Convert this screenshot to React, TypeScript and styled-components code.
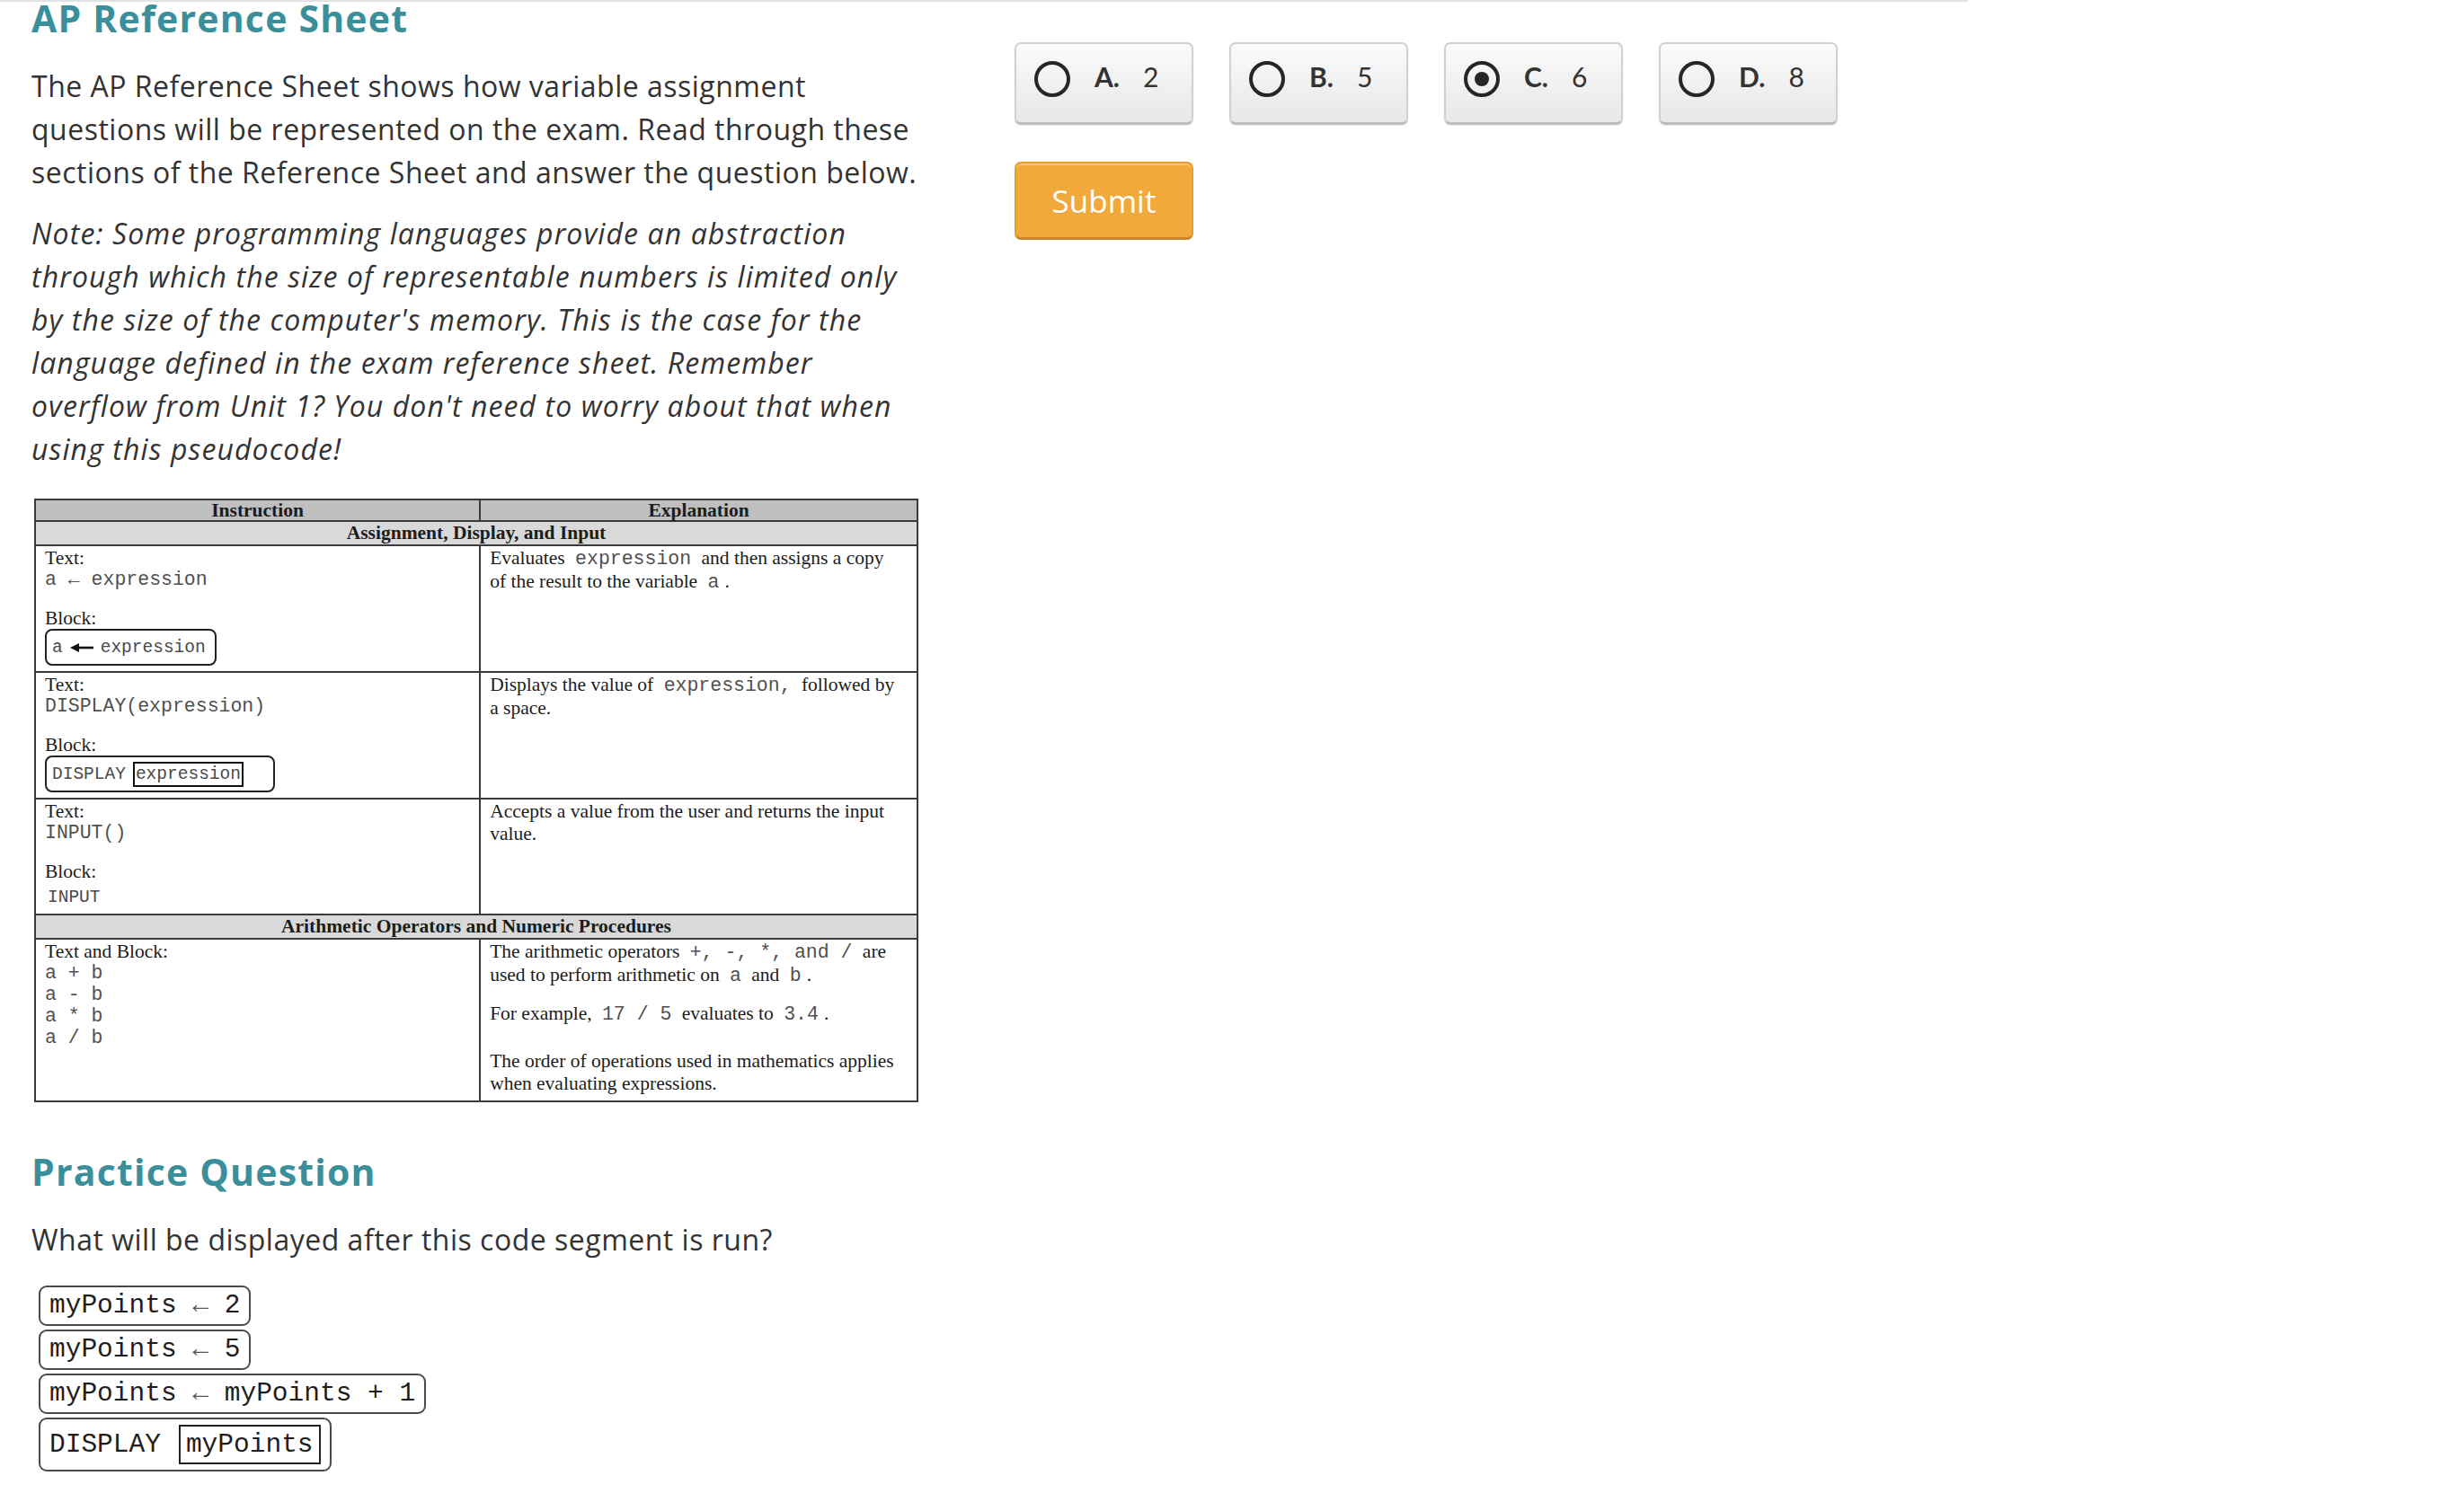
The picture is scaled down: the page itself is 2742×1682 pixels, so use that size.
import React from "react";
import styled, { createGlobalStyle } from "styled-components";

const GlobalStyle = createGlobalStyle`
  html, body { margin: 0; padding: 0; background: #ffffff; }
  body { font-family: "Open Sans", Lato, sans-serif; color: #333333; }
  * { box-sizing: border-box; }
`;

const TopRule = styled.div`
  width: 2190px;
  height: 2px;
  background: #e2e2e5;
`;

const Page = styled.div`
  display: flex;
  align-items: flex-start;
  gap: 94px;
  padding: 0 0 60px 35px;
`;

const LeftColumn = styled.main`
  width: 1000px;
  flex: none;
`;

const RightColumn = styled.aside`
  padding-top: 45px;
  display: flex;
  flex-direction: column;
  align-items: flex-start;
  gap: 41px;
`;

const Heading = styled.h2<{ $top?: number; $bottom?: number }>`
  margin: ${(p) => p.$top ?? 0}px 0 ${(p) => p.$bottom ?? 0}px;
  font-family: "Open Sans", sans-serif;
  font-size: 41px;
  line-height: 36px;
  letter-spacing: 1.2px;
  font-weight: 700;
  color: #3b8f9b;
`;

const Para = styled.p<{ $italic?: boolean; $bottom?: number }>`
  margin: 0 0 ${(p) => p.$bottom ?? 20}px;
  font-family: "Open Sans", sans-serif;
  font-size: 32px;
  line-height: 48px;
  letter-spacing: ${(p) => (p.$italic ? 1.1 : 0.5)}px;
  font-style: ${(p) => (p.$italic ? "italic" : "normal")};
  color: #333333;
  white-space: nowrap;
`;

/* ---------- reference table ---------- */

const RefTable = styled.table`
  width: 984px;
  margin: 0 0 0 3px;
  border-collapse: collapse;
  border: 2px solid #333333;
  font-family: "Liberation Serif", "Times New Roman", serif;
  font-size: 21.5px;
  color: #1c1c1c;
`;

const HeadCell = styled.th<{ $section?: boolean }>`
  padding: 0;
  border: 2px solid #3a3a3a;
  background: ${(p) => (p.$section ? "#d9d9d9" : "#bfbfbf")};
  font-weight: 700;
  text-align: center;
  line-height: ${(p) => (p.$section ? 25 : 22)}px;
  white-space: nowrap;
`;

const Cell = styled.td<{ $wide?: boolean }>`
  width: ${(p) => (p.$wide ? 497 : 487)}px;
  vertical-align: top;
  padding: 1px 10px 6px;
  border: 2px solid #3a3a3a;
  line-height: 24px;
  white-space: nowrap;
`;

const Label = styled.div<{ $gap?: number }>`
  margin-top: ${(p) => p.$gap ?? 0}px;
`;

const ExplainLine = styled.div<{ $gap?: number }>`
  margin-top: ${(p) => p.$gap ?? 0}px;
  line-height: 25px;
`;

const Mono = styled.span<{ $pad?: boolean }>`
  font-family: "Liberation Mono", "Courier New", monospace;
  font-size: 21.5px;
  color: #505050;
  margin: 0 ${(p) => (p.$pad ? 6 : 0)}px;
`;

const CodeLine = styled.div`
  font-family: "Liberation Mono", "Courier New", monospace;
  font-size: 21.5px;
  line-height: 24px;
  color: #505050;
`;

const ThinArrow = styled.span`
  line-height: 1;
  color: #555555;
`;

const BlockBox = styled.div<{ $padRight: number }>`
  display: flex;
  width: fit-content;
  align-items: center;
  gap: 8px;
  height: 41px;
  padding: 0 ${(p) => p.$padRight}px 0 6px;
  border: 2px solid #222222;
  border-radius: 8px;
  font-family: "Liberation Mono", "Courier New", monospace;
  font-size: 19.5px;
  color: #4a4a4a;
`;

const BlockSlot = styled.span`
  border: 2px solid #111111;
  padding: 0 1px;
  line-height: 24px;
`;

const PlainBlock = styled.div`
  margin-top: 5px;
  padding-left: 3px;
  font-family: "Liberation Mono", "Courier New", monospace;
  font-size: 19.5px;
  line-height: 24px;
  color: #4a4a4a;
`;

const BlockArrow = () => (
  <svg width="26" height="12" viewBox="0 0 26 12" aria-hidden="true">
    <line x1="8" y1="6" x2="26" y2="6" stroke="#111" strokeWidth="2.6" />
    <polygon points="0,6 10,1 10,11" fill="#111" />
  </svg>
);

/* ---------- practice code ---------- */

const CodeStack = styled.div`
  margin-left: 8px;
  display: flex;
  flex-direction: column;
  align-items: flex-start;
  gap: 4px;
`;

const CodeBlock = styled.div<{ $nested?: boolean }>`
  display: flex;
  align-items: center;
  gap: 20px;
  padding: ${(p) => (p.$nested ? "6px 10px" : "0 10px")};
  border: 2px solid #4a4a4a;
  border-radius: 9px;
  font-family: "Liberation Mono", "DejaVu Sans Mono", monospace;
  font-size: 29.5px;
  line-height: 41px;
  color: #1e1e1e;
  white-space: pre;
`;

const CodeSlot = styled.span`
  border: 2px solid #222222;
  padding: 0 6px;
  line-height: 40px;
`;

const CodeArrow = styled.span`
  line-height: 1;
  color: #555555;
`;

/* ---------- answer choices ---------- */

const ChoiceRow = styled.div`
  display: flex;
  gap: 40px;
`;

const Choice = styled.button`
  width: 199px;
  height: 92px;
  display: flex;
  align-items: center;
  padding: 0 0 10px 20px;
  border: 2px solid #d0d0d0;
  border-bottom: 3px solid #bcbcbc;
  border-radius: 7px;
  background: linear-gradient(#fbfbfb, #e7e7e7);
  box-shadow: 0 1px 2px rgba(0, 0, 0, 0.08);
  font-family: Lato, sans-serif;
  font-size: 30px;
  color: #333333;
  cursor: pointer;
`;

const RadioDot = styled.span<{ $checked: boolean }>`
  flex: none;
  width: 40px;
  height: 40px;
  margin-right: 27px;
  border: 4px solid #262626;
  border-radius: 50%;
  display: flex;
  align-items: center;
  justify-content: center;
  &::after {
    content: "";
    display: ${(p) => (p.$checked ? "block" : "none")};
    width: 16px;
    height: 16px;
    border-radius: 50%;
    background: #262626;
  }
`;

const ChoiceLetter = styled.span`
  font-weight: 700;
  margin: 0 26px 6px 0;
`;

const ChoiceValue = styled.span`
  margin-bottom: 6px;
`;

const SubmitButton = styled.button`
  width: 199px;
  height: 87px;
  border: 2px solid #e49b30;
  border-bottom: 3px solid #c8862a;
  border-radius: 7px;
  background: #f2a93c;
  box-shadow: inset 0 2px 0 #f8c46f;
  color: #ffffff;
  font-family: "Open Sans", sans-serif;
  font-size: 35px;
  text-shadow: 0 1px 0 rgba(0, 0, 0, 0.08);
  cursor: pointer;
`;

const choices = [
  { letter: "A.", value: "2", checked: false },
  { letter: "B.", value: "5", checked: false },
  { letter: "C.", value: "6", checked: true },
  { letter: "D.", value: "8", checked: false },
];

export default function App() {
  return (
    <>
      <GlobalStyle />
      <TopRule />
      <Page>
        <LeftColumn>
          <Heading $bottom={34}>AP Reference Sheet</Heading>
          <Para>
            The AP Reference Sheet shows how variable assignment
            <br />
            questions will be represented on the exam. Read through these
            <br />
            sections of the Reference Sheet and answer the question below.
          </Para>
          <Para $italic $bottom={31}>
            Note: Some programming languages provide an abstraction
            <br />
            through which the size of representable numbers is limited only
            <br />
            by the size of the computer's memory. This is the case for the
            <br />
            language defined in the exam reference sheet. Remember
            <br />
            overflow from Unit 1? You don't need to worry about that when
            <br />
            using this pseudocode!
          </Para>

          <RefTable>
            <tbody>
              <tr>
                <HeadCell>Instruction</HeadCell>
                <HeadCell>Explanation</HeadCell>
              </tr>
              <tr>
                <HeadCell $section colSpan={2}>
                  Assignment, Display, and Input
                </HeadCell>
              </tr>
              <tr>
                <Cell $wide>
                  <Label>Text:</Label>
                  <CodeLine>
                    a <ThinArrow>←</ThinArrow> expression
                  </CodeLine>
                  <Label $gap={19}>Block:</Label>
                  <BlockBox $padRight={10}>
                    <span>a</span>
                    <BlockArrow />
                    <span>expression</span>
                  </BlockBox>
                </Cell>
                <Cell>
                  <ExplainLine>
                    Evaluates <Mono $pad>expression</Mono> and then assigns a copy
                  </ExplainLine>
                  <ExplainLine>
                    of the result to the variable <Mono $pad>a</Mono>.
                  </ExplainLine>
                </Cell>
              </tr>
              <tr>
                <Cell $wide>
                  <Label>Text:</Label>
                  <CodeLine>DISPLAY(expression)</CodeLine>
                  <Label $gap={19}>Block:</Label>
                  <BlockBox $padRight={33}>
                    <span>DISPLAY</span>
                    <BlockSlot>expression</BlockSlot>
                  </BlockBox>
                </Cell>
                <Cell>
                  <ExplainLine>
                    Displays the value of <Mono $pad>expression,</Mono> followed by
                  </ExplainLine>
                  <ExplainLine>a space.</ExplainLine>
                </Cell>
              </tr>
              <tr>
                <Cell $wide>
                  <Label>Text:</Label>
                  <CodeLine>INPUT()</CodeLine>
                  <Label $gap={19}>Block:</Label>
                  <PlainBlock>INPUT</PlainBlock>
                </Cell>
                <Cell>
                  <ExplainLine>
                    Accepts a value from the user and returns the input
                  </ExplainLine>
                  <ExplainLine>value.</ExplainLine>
                </Cell>
              </tr>
              <tr>
                <HeadCell $section colSpan={2}>
                  Arithmetic Operators and Numeric Procedures
                </HeadCell>
              </tr>
              <tr>
                <Cell $wide>
                  <Label>Text and Block:</Label>
                  <CodeLine>a + b</CodeLine>
                  <CodeLine>a - b</CodeLine>
                  <CodeLine>a * b</CodeLine>
                  <CodeLine>a / b</CodeLine>
                </Cell>
                <Cell>
                  <ExplainLine>
                    The arithmetic operators <Mono $pad>+, -, *, and /</Mono> are
                  </ExplainLine>
                  <ExplainLine>
                    used to perform arithmetic on <Mono $pad>a</Mono> and <Mono $pad>b</Mono>.
                  </ExplainLine>
                  <ExplainLine $gap={17}>
                    For example, <Mono $pad>17 / 5</Mono> evaluates to <Mono $pad>3.4</Mono>.
                  </ExplainLine>
                  <ExplainLine $gap={27}>
                    The order of operations used in mathematics applies
                  </ExplainLine>
                  <ExplainLine>when evaluating expressions.</ExplainLine>
                </Cell>
              </tr>
            </tbody>
          </RefTable>

          <Heading $top={59} $bottom={34}>Practice Question</Heading>
          <Para $bottom={27}>What will be displayed after this code segment is run?</Para>

          <CodeStack>
            <CodeBlock>
              <span>
                myPoints <CodeArrow>←</CodeArrow> 2
              </span>
            </CodeBlock>
            <CodeBlock>
              <span>
                myPoints <CodeArrow>←</CodeArrow> 5
              </span>
            </CodeBlock>
            <CodeBlock>
              <span>
                myPoints <CodeArrow>←</CodeArrow> myPoints + 1
              </span>
            </CodeBlock>
            <CodeBlock $nested>
              <span>DISPLAY</span>
              <CodeSlot>myPoints</CodeSlot>
            </CodeBlock>
          </CodeStack>
        </LeftColumn>

        <RightColumn>
          <ChoiceRow>
            {choices.map((c) => (
              <Choice key={c.letter} type="button">
                <RadioDot $checked={c.checked} />
                <ChoiceLetter>{c.letter}</ChoiceLetter>
                <ChoiceValue>{c.value}</ChoiceValue>
              </Choice>
            ))}
          </ChoiceRow>
          <SubmitButton type="button">Submit</SubmitButton>
        </RightColumn>
      </Page>
    </>
  );
}
